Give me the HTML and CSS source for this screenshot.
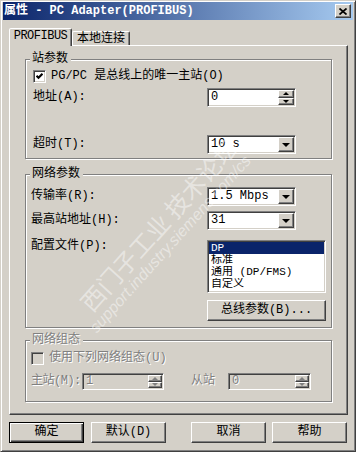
FILE: index.html
```html
<!DOCTYPE html>
<html>
<head>
  <title>属性 - PC Adapter(PROFIBUS)</title>
  <link rel="stylesheet" href="styles.css">
</head>

<body>

<div class="window">

  <div class="titlebar">
    <span class="title">属性 - PC Adapter(PROFIBUS)</span>
    <button class="btn close">
      <svg width="8" height="7" viewBox="0 0 8 7"><path d="M0.5 0.5 L7.5 6.5 M7.5 0.5 L0.5 6.5" stroke="#000" stroke-width="1.7" fill="none"/></svg>
    </button>
  </div>

  <div class="tabs">
    <div class="tab active">PROFIBUS</div>
    <div class="tab other">本地连接</div>
  </div>

  <div class="panel">

    <fieldset class="group g1">
      <legend>站参数</legend>
      <div class="row" id="pgpc">
        <span class="checkbox">
          <svg width="7" height="7" viewBox="0 0 7 7"><polyline points="0.5,2.8 2.5,4.8 6.5,0.8" stroke="#000" stroke-width="2.2" fill="none"/></svg>
        </span>
        <span>PG/PC 是总线上的唯一主站(O)</span>
      </div>
      <div class="row" id="addr">
        <span class="lbl">地址(A):</span>
        <div class="field spin">
          <span class="val">0</span>
          <div class="spin-btns">
            <span class="btn"><i class="up"></i></span>
            <span class="btn"><i class="down"></i></span>
          </div>
        </div>
      </div>
      <div class="row" id="timeout">
        <span class="lbl">超时(T):</span>
        <div class="field combo">
          <span class="val">10 s</span>
          <span class="btn drop"><i class="arrow"></i></span>
        </div>
      </div>
    </fieldset>

    <fieldset class="group g2">
      <legend>网络参数</legend>
      <div class="row" id="baud">
        <span class="lbl">传输率(R):</span>
        <div class="field combo">
          <span class="val">1.5 Mbps</span>
          <span class="btn drop"><i class="arrow"></i></span>
        </div>
      </div>
      <div class="row" id="hsa">
        <span class="lbl">最高站地址(H):</span>
        <div class="field combo">
          <span class="val">31</span>
          <span class="btn drop"><i class="arrow"></i></span>
        </div>
      </div>
      <div class="row" id="profile">
        <span class="lbl">配置文件(P):</span>
        <div class="field listbox">
          <div class="item selected">DP</div>
          <div class="item">标准</div>
          <div class="item">通用 (DP/FMS)</div>
          <div class="item">自定义</div>
        </div>
      </div>
      <div class="row" id="busbtn">
        <button class="btn bus">总线参数(B)...</button>
      </div>
    </fieldset>

    <fieldset class="group g3 disabled">
      <legend>网络组态</legend>
      <div class="row" id="usecfg">
        <span class="checkbox"></span>
        <span>使用下列网络组态(U)</span>
      </div>
      <div class="row" id="stations">
        <span class="lbl master">主站(M):</span>
        <div class="field spin small master-spin">
          <span class="val">1</span>
          <div class="spin-btns">
            <span class="btn"><i class="up"></i></span>
            <span class="btn"><i class="down"></i></span>
          </div>
        </div>
        <span class="lbl slave">从站</span>
        <div class="field spin small slave-spin">
          <span class="val">0</span>
          <div class="spin-btns">
            <span class="btn"><i class="up"></i></span>
            <span class="btn"><i class="down"></i></span>
          </div>
        </div>
      </div>
    </fieldset>

  </div>

  <div class="buttons">
    <button class="btn push default">确定</button>
    <button class="btn push" id="btnDefault">默认(D)</button>
    <button class="btn push" id="btnCancel">取消</button>
    <button class="btn push" id="btnHelp">帮助</button>
  </div>

  <div class="watermark">
    <div class="wm-cn">西门子工业 技术论坛</div>
    <div class="wm-url">support.industry.siemens.com/cs</div>
  </div>

</div>

</body>
</html>
```

FILE: styles.css
```css
* {
  box-sizing: border-box;
}

body {
  margin: 0;
  background: #d4d0c8;
  color: #000;
  font-family: "Liberation Mono", "Noto Sans CJK SC", monospace;
  font-size: 12px;
  line-height: 13px;
}

.window {
  position: relative;
  width: 356px;
  height: 452px;
  padding: 1px 2px;
  border: 1px solid;
  border-color: #d4d0c8 #404040 #404040 #d4d0c8;
  box-shadow: inset 1px 1px 0 #fff, inset -1px -1px 0 #808080;
  background: #d4d0c8;
  overflow: hidden;
}

/* title bar */
.titlebar {
  height: 18px;
  display: flex;
  align-items: center;
  justify-content: space-between;
  padding: 0 2px 0 1px;
  background: linear-gradient(to right, #0a246a, #a6caf0);
}
.title {
  color: #fff;
  font-weight: bold;
  white-space: nowrap;
}

/* raised 3d button */
.btn {
  display: flex;
  align-items: center;
  justify-content: center;
  padding: 0;
  background: #d4d0c8;
  border: 1px solid;
  border-color: #fff #404040 #404040 #fff;
  box-shadow: inset -1px -1px 0 #808080;
  font: inherit;
  color: #000;
}
.close {
  width: 16px;
  height: 14px;
}

/* tabs */
.tabs {
  display: flex;
  align-items: flex-end;
  height: 17px;
  margin: 8px 0 0 6px;
}
.tab {
  display: flex;
  align-items: center;
  justify-content: center;
  height: 14px;
  border: 1px solid;
  border-bottom: 0;
  border-color: #fff #404040 transparent #fff;
  box-shadow: inset -1px 0 0 #808080;
  border-radius: 2px 2px 0 0;
  white-space: nowrap;
}
.tab.active {
  position: relative;
  z-index: 1;
  width: 63px;
  height: 18px;
  margin-bottom: -1px;
  padding-bottom: 2px;
  background: #d4d0c8;
  letter-spacing: -0.5px;
}
.tab.other {
  width: 58px;
  padding-top: 1px;
}

.panel {
  width: 339px;
  height: 370px;
  margin-left: 6px;
  padding-top: 7px;
  border: 1px solid;
  border-color: #fff #404040 #404040 #fff;
  box-shadow: inset -1px -1px 0 #808080;
}

/* group boxes */
.group {
  min-width: 0;
  margin: 0 15px;
  padding: 0 5px;
  border: 1px solid #808080;
  box-shadow: inset 1px 1px 0 #fff, 1px 1px 0 #fff;
}
.group legend {
  margin-left: -1px;
  padding: 0 3px 0 2px;
  line-height: 13px;
  background: #d4d0c8;
}
.g1 { padding-bottom: 4px; }
.g2 { margin-top: 9px; padding-bottom: 6px; }
.g3 { margin-top: 6px; padding-bottom: 11px; }

.row {
  display: flex;
  align-items: center;
  white-space: nowrap;
}
.lbl {
  width: 176px;
  flex: none;
}
.g1 .row { padding-left: 2px; }
.g1 .lbl { width: 174px; }

#pgpc { height: 20px; gap: 5px; }
#addr { margin-top: 2px; height: 19px; }
#timeout { margin-top: 28px; height: 19px; }

#baud { margin-top: 6px; height: 19px; }
#hsa { margin-top: 5px; height: 19px; }
#profile { margin-top: 10px; align-items: flex-start; }
#busbtn { margin-top: 7px; }

#usecfg { margin-top: 1px; height: 20px; gap: 5px; }
#stations { margin-top: 5px; height: 17px; }

/* checkbox */
.checkbox {
  display: flex;
  align-items: center;
  justify-content: center;
  width: 13px;
  height: 13px;
  flex: none;
  background: #fff;
  border: 1px solid;
  border-color: #808080 #fff #fff #808080;
  box-shadow: inset 1px 1px 0 #404040, inset -1px -1px 0 #d4d0c8;
}

/* sunken fields */
.field {
  display: flex;
  align-items: center;
  padding: 1px;
  background: #fff;
  border: 1px solid;
  border-color: #808080 #fff #fff #808080;
  box-shadow: inset 1px 1px 0 #404040, inset -1px -1px 0 #d4d0c8;
}
.field .val {
  flex: 1;
  padding-left: 2px;
}
.combo,
.spin {
  width: 89px;
  height: 19px;
}
.drop {
  width: 16px;
  height: 15px;
}
.arrow {
  width: 0;
  height: 0;
  border-left: 4px solid transparent;
  border-right: 4px solid transparent;
  border-top: 4px solid #000;
}
.spin-btns {
  display: flex;
  flex-direction: column;
  width: 16px;
  height: 15px;
}
.spin-btns .btn {
  flex: 1;
}
.up,
.down {
  width: 0;
  height: 0;
  border-left: 3px solid transparent;
  border-right: 3px solid transparent;
}
.up { border-bottom: 3px solid #000; }
.down { border-top: 3px solid #000; }

.listbox {
  display: block;
  width: 119px;
  height: 53px;
}
.item {
  height: 12px;
  overflow: hidden;
  font-size: 11px;
  line-height: 12px;
  padding-left: 2px;
}
.item.selected {
  background: #0a246a;
  color: #fff;
}

.bus {
  width: 119px;
  height: 21px;
  margin-left: 176px;
}

/* disabled group */
.disabled {
  color: #808080;
  text-shadow: 1px 1px 0 #fff;
}
.disabled .checkbox,
.disabled .field {
  background: #d4d0c8;
}
.disabled .up { border-bottom-color: #808080; }
.disabled .down { border-top-color: #808080; }
.small {
  height: 17px;
}
.small .spin-btns {
  width: 14px;
  height: 13px;
}
.lbl.master {
  width: 51px;
  letter-spacing: -0.5px;
}
.master-spin { width: 82px; }
.lbl.slave {
  width: 37px;
  margin-left: 27px;
}
.slave-spin { width: 83px; }

/* bottom buttons */
.buttons {
  display: flex;
  margin: 7px 0 0 6px;
}
.push {
  width: 75px;
  height: 21px;
}
.push.default {
  border-color: #000;
  box-shadow: inset 1px 1px 0 #fff, inset -1px -1px 0 #404040, inset -2px -2px 0 #808080;
}
#btnDefault { margin-left: 7px; }
#btnCancel { margin-left: 25px; }
#btnHelp { margin-left: 6px; }

/* forum watermark */
.watermark {
  position: absolute;
  left: 74px;
  top: 297px;
  transform: rotate(-48deg);
  transform-origin: 0 0;
  color: rgba(255, 255, 255, 0.45);
  white-space: nowrap;
  pointer-events: none;
}
.wm-cn {
  font-family: "Noto Sans CJK SC", sans-serif;
  font-size: 24px;
  line-height: 26px;
}
.wm-url {
  margin-left: -12px;
  font-family: "Liberation Sans", sans-serif;
  font-style: italic;
  font-size: 16px;
  line-height: 18px;
}
```
